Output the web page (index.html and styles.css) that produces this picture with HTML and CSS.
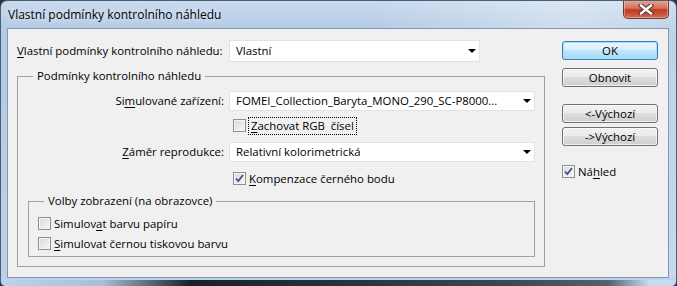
FILE: index.html
```html
<!DOCTYPE html>
<html lang="cs">
<head>
  <meta charset="UTF-8">
  <title>Vlastní podmínky kontrolního náhledu</title>
  <link rel="stylesheet" href="styles.css">
</head>
<body>
  <div class="window">
    <!-- title bar -->
    <div class="titlebar">
      <span class="title">Vlastní podmínky kontrolního náhledu</span>
      <div class="close">
        <svg width="16" height="11" viewBox="0 0 16 11">
          <path d="M3 1.5 L13 9.5 M13 1.5 L3 9.5" stroke="#4b3431" stroke-width="4.4" stroke-linecap="square"/>
          <path d="M3 1.5 L13 9.5 M13 1.5 L3 9.5" stroke="#fff" stroke-width="2.4" stroke-linecap="square"/>
        </svg>
      </div>
    </div>

    <div class="client">
      <div class="main">
        <div class="row top-row">
          <span class="lbl"><u>V</u>lastní podmínky kontrolního náhledu:</span>
          <div class="combo combo-top"><span class="val">Vlastní</span><i class="arrow"></i></div>
        </div>

        <fieldset class="group outer">
          <legend>Podmínky kontrolního náhledu</legend>
          <div class="row first">
            <span class="lbl right">Si<u>m</u>ulované zařízení:</span>
            <div class="combo"><span class="val">FOMEI_Collection_Baryta_MONO_290_SC-P8000...</span><i class="arrow"></i></div>
          </div>
          <div class="check-row indent">
            <span class="check"></span>
            <span class="focus"><u>Z</u>achovat RGB&nbsp; čísel</span>
          </div>
          <div class="row">
            <span class="lbl right"><u>Z</u>áměr reprodukce:</span>
            <div class="combo"><span class="val">Relativní kolorimetrická</span><i class="arrow"></i></div>
          </div>
          <div class="check-row indent">
            <span class="check checked"></span>
            <span class="txt"><u>K</u>ompenzace černého bodu</span>
          </div>

          <fieldset class="group inner">
            <legend>Volby zobrazení (na obrazovce)</legend>
            <div class="check-row first">
              <span class="check"></span>
              <span class="txt">Simulov<u>a</u>t barvu papíru</span>
            </div>
            <div class="check-row second">
              <span class="check"></span>
              <span class="txt"><u>S</u>imulovat černou tiskovou barvu</span>
            </div>
          </fieldset>
        </fieldset>
      </div>

      <div class="side">
        <div class="btn default">OK</div>
        <div class="btn btn-reset">Obnovit</div>
        <div class="btn btn-prev">&lt;-Výchozí</div>
        <div class="btn btn-next">-&gt;Výchozí</div>
        <div class="check-row preview">
          <span class="check checked"></span>
          <span class="txt">Ná<u>h</u>led</span>
        </div>
      </div>
    </div>

    <div class="frame-bottom"></div>
  </div>
</body>
</html>
```

FILE: styles.css
```css
* {
  box-sizing: border-box;
}
body {
  margin: 0;
  background: #2a3440;
  font-family: "Open Sans", "Liberation Sans", Arial, sans-serif;
  font-size: 11.4px;
  line-height: 14px;
  color: #000;
}
u {
  text-decoration-thickness: 1px;
  text-underline-offset: 2px;
}

/* window frame */
.window {
  width: 677px;
  height: 286px;
  display: flex;
  flex-direction: column;
  border-radius: 7px 7px 5px 5px;
  border: 1px solid #4d5e72;
  border-bottom: 0;
  background:
    linear-gradient(to right, rgba(255,255,255,0) 55%, rgba(255,255,255,.35) 85%, rgba(255,255,255,.15) 100%),
    linear-gradient(#c9daee, #b3cae4 30px, #bcd2ea);
  overflow: hidden;
}
.titlebar {
  height: 27px;
  display: flex;
  justify-content: space-between;
  align-items: flex-start;
}
.title {
  padding: 7px 0 0 7px;
  font-size: 12px;
  text-shadow: 0 0 6px rgba(255,255,255,.9);
}
.close {
  width: 46px;
  height: 19px;
  margin: -1px 7px 0 0;
  border: 1px solid #6a3a33;
  border-top: 0;
  border-radius: 0 0 5px 5px;
  background: linear-gradient(#e9a99a, #d5705a 45%, #c13a20 55%, #d26a52);
  box-shadow: inset 0 0 0 1px rgba(255,255,255,.35);
  display: flex;
  align-items: center;
  justify-content: center;
}

/* client area */
.client {
  height: 250px;
  margin: 0 7px 0 6px;
  border: 1px solid #8297b0;
  background: #f0f0f0;
  display: flex;
  padding-left: 9px;
}
.main {
  width: 528px;
}
.side {
  width: 96px;
  margin-left: 17px;
  padding-top: 12px;
}

.row {
  display: flex;
  align-items: center;
}
.top-row {
  margin-top: 11px;
}
.lbl {
  width: 207px;
  white-space: nowrap;
}
.lbl.right {
  width: 206px;
  text-align: right;
}
.combo {
  margin-left: 5px;
  width: 306px;
  height: 20px;
  background: #fff;
  border: 1px solid #e2e2e2;
  display: flex;
  align-items: center;
  justify-content: space-between;
  padding-left: 6px;
}
.combo-top {
  width: 251px;
  height: 22px;
}
.val {
  white-space: nowrap;
}
.arrow {
  width: 0;
  height: 0;
  margin-right: 3px;
  border-top: 4px solid #000;
  border-left: 4px solid transparent;
  border-right: 4px solid transparent;
}

/* group boxes */
.group {
  margin: 0;
  padding: 0;
  border: 1px solid #a0a0a0;
  min-width: 0;
}
.group legend {
  padding: 0 4px;
  margin-left: 15px;
  line-height: 14px;
}
.outer {
  margin-top: 7px;
  height: 198px;
}
.outer .row {
  margin-top: 8px;
}
.inner {
  margin: 7px 9px 0 10px;
  height: 63px;
}

.check-row {
  display: flex;
  align-items: center;
  height: 17px;
}
.indent {
  margin-left: 215px;
  margin-top: 6px;
}
.outer > .check-row.indent:nth-of-type(4) {
  margin-top: 8px;
}
.inner .check-row {
  margin-left: 9px;
}
.inner .first {
  margin-top: 7px;
}
.inner .second {
  margin-top: 3px;
}
.check {
  width: 13px;
  height: 13px;
  flex: none;
  border: 1px solid #8e8f8f;
  background: linear-gradient(135deg, #d6d9dd, #f7f7f7);
  box-shadow: inset 0 0 0 1px #f4f4f4;
  margin-right: 3px;
}
.check.checked {
  background:
    url("data:image/svg+xml,%3Csvg xmlns='http://www.w3.org/2000/svg' width='11' height='11'%3E%3Cpath d='M2 5.5 L4.3 8 L9 2' fill='none' stroke='%23405488' stroke-width='1.8'/%3E%3C/svg%3E") center/11px 11px no-repeat,
    linear-gradient(135deg, #d6d9dd, #f7f7f7);
}
.focus {
  outline: 1px dotted #000;
  outline-offset: 0;
  padding: 1px 2px;
  white-space: pre;
}

/* buttons */
.btn {
  height: 19px;
  border: 1px solid #707070;
  border-radius: 3px;
  background: linear-gradient(#f2f2f2, #ebebeb 45%, #dddddd 50%, #cfcfcf);
  box-shadow: inset 0 0 0 1px rgba(255,255,255,.7);
  text-align: center;
  line-height: 17px;
}
.btn.default {
  border-color: #3c7fb1;
  background: linear-gradient(#eaf6fd, #d9f0fc 45%, #bee6fd 50%, #a7d9f5);
  box-shadow: inset 0 0 0 1px #9fe0fb;
}
.btn-reset {
  margin-top: 8px;
}
.btn-prev {
  margin-top: 17px;
}
.btn-next {
  margin-top: 4px;
}
.preview {
  margin-top: 17px;
}

.frame-bottom {
  flex: 1;
  background:
    linear-gradient(to right, #bcd3eb 0, #a9bfd7 15%, #1a1f27 28%, #2a3039 50%, #3d4652 75%, #56616e 90%, #c4dbf2 96%),
    #2a3440;
  border-top: 2px solid #bcd3ea;
}
```
